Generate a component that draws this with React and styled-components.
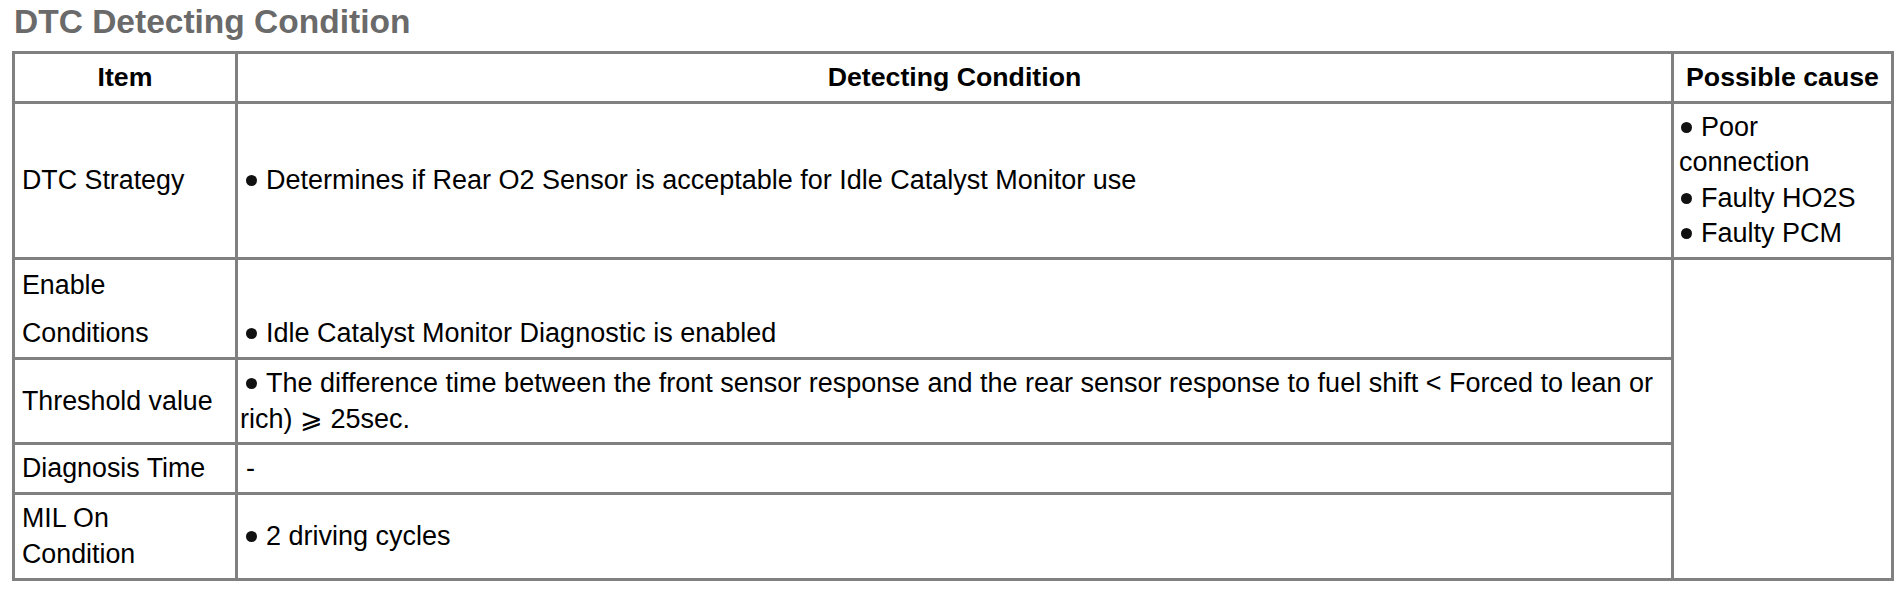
import styled, { createGlobalStyle } from 'styled-components'

const GlobalStyle = createGlobalStyle`
  body {
    margin: 0;
    background: #fff;
    font-family: "Liberation Sans", Arial, sans-serif;
    color: #000;
  }
`

const Page = styled.div`
  padding: 5px 0 0 12px;
`

const Title = styled.h2`
  margin: 0 0 13px 2px;
  font-size: 33.5px;
  line-height: 33px;
  font-weight: bold;
  color: #6a6a6a;
`

const Grid = styled.div`
  display: grid;
  grid-template-columns: 220px 1433px 217px;
  grid-template-rows: 47px 153px 97px 82px 47px 83px;
  gap: 3px;
  padding: 3px;
  width: fit-content;
  background: #808080;
`

const Cell = styled.div`
  display: flex;
  flex-direction: column;
  justify-content: ${p => (p.$bottom ? 'flex-end' : 'center')};
  background: #fff;
  font-size: 27px;
  line-height: ${p => p.$lh || '35.5px'};
`

const HeadCell = styled(Cell)`
  align-items: center;
  font-weight: bold;
  font-size: 26.7px;
`

const LabelCell = styled(Cell)`
  padding: 0 10px 0 7px;
  font-size: 26.8px;
`

const ConditionCell = styled(Cell)`
  padding: 0 8px 0 2px;
  text-indent: 6px;
`

const CauseCell = styled(Cell)`
  padding: 0 4px 0 5px;
  text-indent: 2px;
`

const MergedCause = styled(CauseCell)`
  grid-column: 3;
  grid-row: 3 / span 4;
`

const Dot = styled.span`
  display: inline-block;
  width: 11px;
  height: 11px;
  margin: 0 9px 0 0;
  border-radius: 50%;
  background: #111;
  vertical-align: 3px;
  text-indent: 0;
`

const Item = ({ children, bullet = true }) => (
  <div>
    {bullet && <Dot />}
    {children}
  </div>
)

const rows = [
  { label: 'DTC Strategy', text: 'Determines if Rear O2 Sensor is acceptable for Idle Catalyst Monitor use' },
  { label: 'Enable Conditions', text: 'Idle Catalyst Monitor Diagnostic is enabled', lh: '48px', bottom: true },
  { label: 'Threshold value', text: 'The difference time between the front sensor response and the rear sensor response to fuel shift < Forced to lean or rich) ⩾ 25sec.', lh: '36.5px' },
  { label: 'Diagnosis Time', text: '-', plain: true },
  { label: 'MIL On Condition', text: '2 driving cycles' },
]

const causes = ['Poor connection', 'Faulty HO2S', 'Faulty PCM']

export default function App() {
  return (
    <Page>
      <GlobalStyle />
      <Title>DTC Detecting Condition</Title>
      <Grid>
        <HeadCell>Item</HeadCell>
        <HeadCell>Detecting Condition</HeadCell>
        <HeadCell>Possible cause</HeadCell>
        <MergedCause />
        {rows.map((r, i) => (
          <Row key={r.label} row={r} first={i === 0} />
        ))}
      </Grid>
    </Page>
  )
}

const Row = ({ row, first }) => (
  <>
    <LabelCell $lh={row.lh}>{row.label}</LabelCell>
    <ConditionCell $lh={row.lh} $bottom={row.bottom}>
      <Item bullet={!row.plain}>{row.text}</Item>
    </ConditionCell>
    {first && (
      <CauseCell>
        {causes.map(c => <Item key={c}>{c}</Item>)}
      </CauseCell>
    )}
  </>
)
